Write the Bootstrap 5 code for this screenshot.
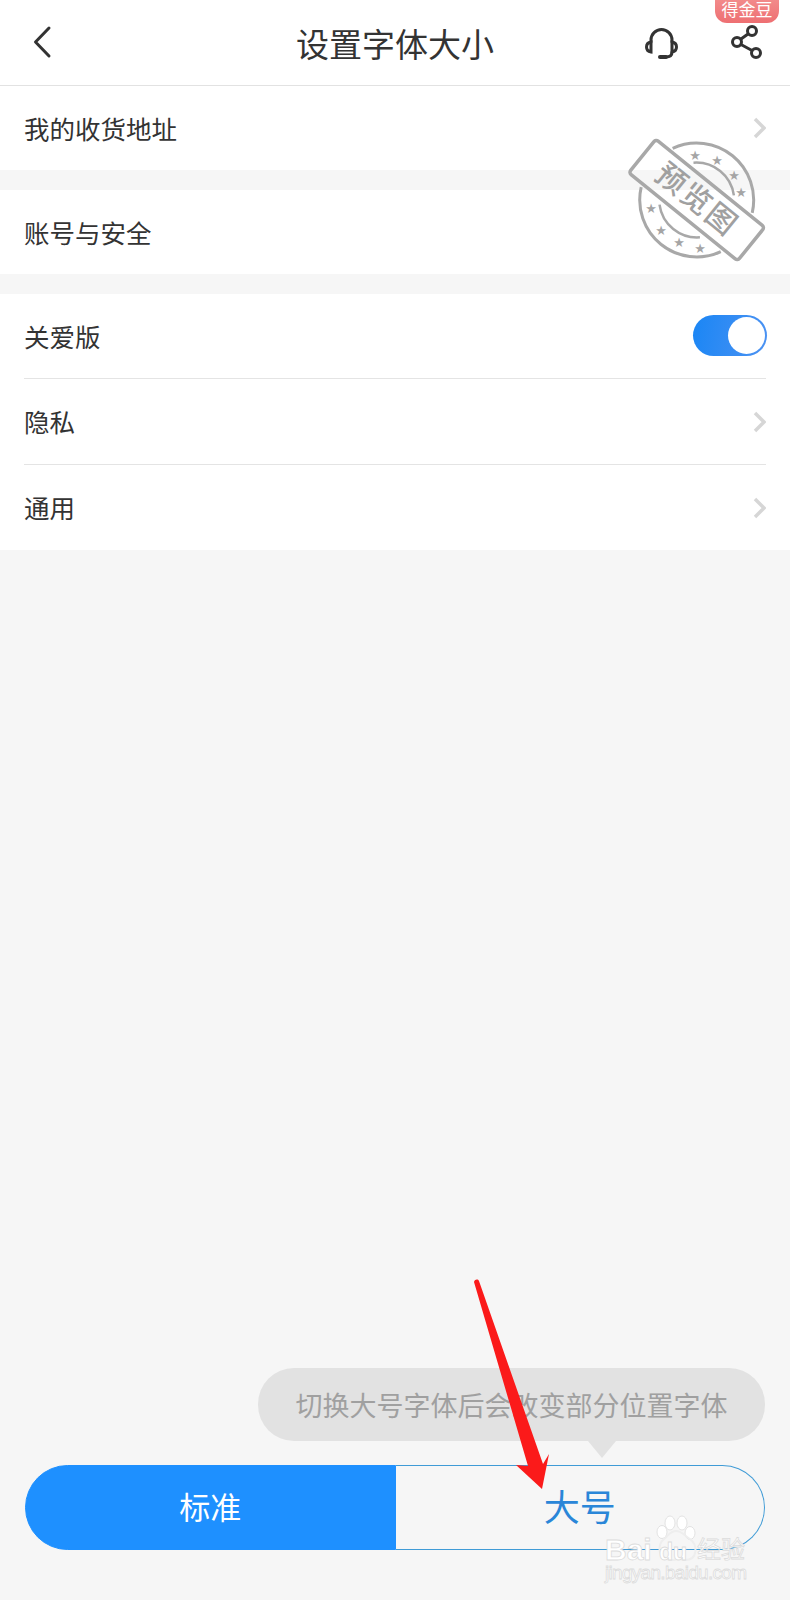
<!DOCTYPE html>
<html lang="zh-CN">
<head>
  <meta charset="UTF-8" />
  <meta name="viewport" content="width=device-width, initial-scale=1" />
  <title>设置字体大小</title>
  <link href="https://cdn.jsdelivr.net/npm/bootstrap@5.3.0/dist/css/bootstrap.min.css" rel="stylesheet">
  <style>
    body { background-color: #f6f6f6; font-family: "Liberation Sans", "Noto Sans CJK SC", sans-serif; color: #333; }
    .page-wrap { width: 790px; height: 1600px; }
    .top-bar { height: 86px; background: #fff; border-bottom: 1px solid #e2e2e2; }
    .top-title { font-size: 33px; line-height: 1; top: 29px; left: 0; right: 0; color: #333; }
    .back-icon { left: 30px; top: 24px; }
    .head-icons { left: 640px; top: 20px; }
    .gold-badge { left: 715px; top: 0; width: 64px; height: 23px; font-size: 17px; line-height: 21px; color: #fff;
      background: linear-gradient(#f28a8a, #ee6f72); border-radius: 0 0 12px 12px / 0 0 12px 12px; }
    .set-group { background: #fff; margin-bottom: 20px; }
    .set-row { height: 84px; padding: 0 24px; font-size: 25.500px; color: #333; }
    .set-row span { padding-top: 4px; }
    .set-line + .set-row { height: 85px; }
    .set-line { height: 1px; background: #e4e4e4; margin-left: 24px; margin-right: 24px; }
    .set-group.last-one { margin-bottom: 0; }
    .switch-pill { width: 74px; height: 41px; border-radius: 21px; background: linear-gradient(100deg, #1a86f5, #4c92f2); margin: -1px -1px 0 0; padding: 2px; }
    .switch-knob { width: 37px; height: 37px; border-radius: 50%; background: #fff; }
    .bottom-area { padding: 0 25px 50px; }
    .hint-bubble { width: 507px; height: 73px; background: #e2e2e2; border-radius: 36px; color: #a0a0a0; font-size: 27px; margin-bottom: 24px; padding-top: 5px; }
    .hint-bubble::after { content: ""; position: absolute; left: 330px; top: 73px; border-left: 14px solid transparent; border-right: 14px solid transparent; border-top: 17px solid #e2e2e2; }
    .size-seg { height: 85px; }
    .size-seg .btn { flex: 1 1 0; border-radius: 0; height: 85px; padding: 3px 0 0; display: flex; align-items: center; justify-content: center; }
    .seg-on { background: #1e90ff; border: 1px solid #1e90ff; color: #fff; font-size: 31px; border-radius: 43px 0 0 43px !important; }
    .seg-off { background: transparent; border: 1px solid #3f9bd6; border-left: 0; color: #2a86d8; font-size: 36px; border-radius: 0 43px 43px 0 !important; }
    .over-svg { left: 0; top: 0; pointer-events: none; }
  </style>
</head>
<body>
  <div class="page-wrap position-relative d-flex flex-column overflow-hidden">
    <div class="top-bar position-relative flex-shrink-0">
      <div class="top-title position-absolute text-center">设置字体大小</div>
      <svg class="back-icon position-absolute" width="30" height="36" viewBox="0 0 30 36"><path d="M19 4 5.500 18 19 32" fill="none" stroke="#333" stroke-width="3" stroke-linecap="round" stroke-linejoin="round"/></svg>
      <svg class="head-icons position-absolute" width="130" height="44" viewBox="640 20 130 44" fill="none" stroke="#333" stroke-width="3" stroke-linecap="round">
        <path d="M651 42v-2a10.500 10.500 0 0 1 21 0v2"/>
        <path d="M651 42c-3 .5-4.500 2.500-4.500 5s1.500 4.500 4.500 5z"/>
        <path d="M672 42c3 .5 4.500 2.500 4.500 5s-1.500 4.500-4.500 5z"/>
        <path d="M672 52c0 3-2 5-6 5"/>
        <path d="M660 57h6" stroke-width="4"/>
        <circle cx="752" cy="31" r="4.500"/>
        <circle cx="737" cy="42" r="4.500"/>
        <circle cx="756" cy="53" r="4.500"/>
        <path d="M748 34 741 39M741 44.500 752 50.500"/>
      </svg>
      <div class="gold-badge position-absolute text-center">得金豆</div>
    </div>

    <div class="set-group flex-shrink-0">
      <div class="set-row d-flex align-items-center justify-content-between">
        <span>我的收货地址</span>
        <svg width="13" height="22" viewBox="0 0 13 22"><path d="M2 2l9 9-9 9" fill="none" stroke="#d6d6d6" stroke-width="3.500"/></svg>
      </div>
    </div>
    <div class="set-group flex-shrink-0">
      <div class="set-row d-flex align-items-center justify-content-between">
        <span>账号与安全</span>
      </div>
    </div>
    <div class="set-group last-one flex-shrink-0">
      <div class="set-row d-flex align-items-center justify-content-between">
        <span>关爱版</span>
        <div class="switch-pill d-flex justify-content-end"><div class="switch-knob"></div></div>
      </div>
      <div class="set-line"></div>
      <div class="set-row d-flex align-items-center justify-content-between">
        <span>隐私</span>
        <svg width="13" height="22" viewBox="0 0 13 22"><path d="M2 2l9 9-9 9" fill="none" stroke="#d6d6d6" stroke-width="3.500"/></svg>
      </div>
      <div class="set-line"></div>
      <div class="set-row d-flex align-items-center justify-content-between">
        <span>通用</span>
        <svg width="13" height="22" viewBox="0 0 13 22"><path d="M2 2l9 9-9 9" fill="none" stroke="#d6d6d6" stroke-width="3.500"/></svg>
      </div>
    </div>

    <div class="bottom-area mt-auto">
      <div class="d-flex justify-content-end">
        <div class="hint-bubble position-relative d-flex align-items-center justify-content-center">切换大号字体后会改变部分位置字体</div>
      </div>
      <div class="size-seg d-flex">
        <button type="button" class="btn seg-on">标准</button>
        <button type="button" class="btn seg-off">大号</button>
      </div>
    </div>

    <!-- preview stamp -->
    <svg class="over-svg position-absolute" width="790" height="1600" viewBox="0 0 790 1600">
      <g transform="translate(696.700 200)">
        <g transform="rotate(39)" fill="none" stroke="#a8a8a8">
          <rect x="-70" y="-21.500" width="140" height="43" rx="3" stroke-width="3.500"/>
          <path d="M-51.200 -25A57 57 0 0 1 51.200 -25M51.200 25A57 57 0 0 1 -51.200 25" stroke-width="3"/>
          <path d="M-26 -27A38 38 0 0 1 26 -27M26 27A38 38 0 0 1 -26 27" stroke-width="2.500"/>
          <text x="0" y="10" text-anchor="middle" font-size="30" fill="#a0a0a0" stroke="none" font-family="'Noto Sans CJK SC', sans-serif" font-weight="500" letter-spacing="2">预览图</text>
        </g>
      </g>
      <g font-size="13" fill="#a5a5a5" text-anchor="middle" font-family="'DejaVu Sans', sans-serif">
        <text x="695" y="160">★</text><text x="717" y="165">★</text><text x="734" y="180">★</text><text x="741" y="197">★</text>
        <text x="651" y="213">★</text><text x="661" y="235">★</text><text x="679" y="247">★</text><text x="700" y="253">★</text>
      </g>

      <!-- watermark -->
      <g fill="#fff" stroke="#dcdcdc" stroke-width="0.800">
        <ellipse cx="662" cy="1532" rx="5" ry="6.500"/>
        <ellipse cx="670" cy="1523" rx="5" ry="7"/>
        <ellipse cx="682" cy="1523" rx="5" ry="7"/>
        <ellipse cx="690" cy="1533" rx="5" ry="6.500"/>
        <path d="M676 1531c-6 0-8 5-12 8-7 5-7 21 8 21 3 0 5-1 7-1 2 0 3 1 6 1 13 0 13-15 5-21-5-3-8-8-14-8z" fill="none" stroke-width="2" stroke="#eee"/>
        <text x="605" y="1560" font-size="30" font-weight="700" font-family="'Liberation Sans', sans-serif">Bai</text>
        <text x="659" y="1560" font-size="23" font-weight="700" font-family="'Liberation Sans', sans-serif">du</text>
        <text x="697" y="1558" font-size="24" font-family="'Noto Sans CJK SC', sans-serif">经验</text>
        <text x="605" y="1579" font-size="19" textLength="142" font-family="'Liberation Sans', sans-serif">jingyan.baidu.com</text>
      </g>

      <!-- red arrow drawn over the shot -->
      <path d="M474 1282c1-3 4-3 5-1L543 1464 549 1454 542 1489 516 1465 528 1466z" fill="#fb1a1a"/>
    </svg>
  </div>

  <script src="https://cdn.jsdelivr.net/npm/bootstrap@5.3.0/dist/js/bootstrap.bundle.min.js" defer></script>
</body>
</html>
